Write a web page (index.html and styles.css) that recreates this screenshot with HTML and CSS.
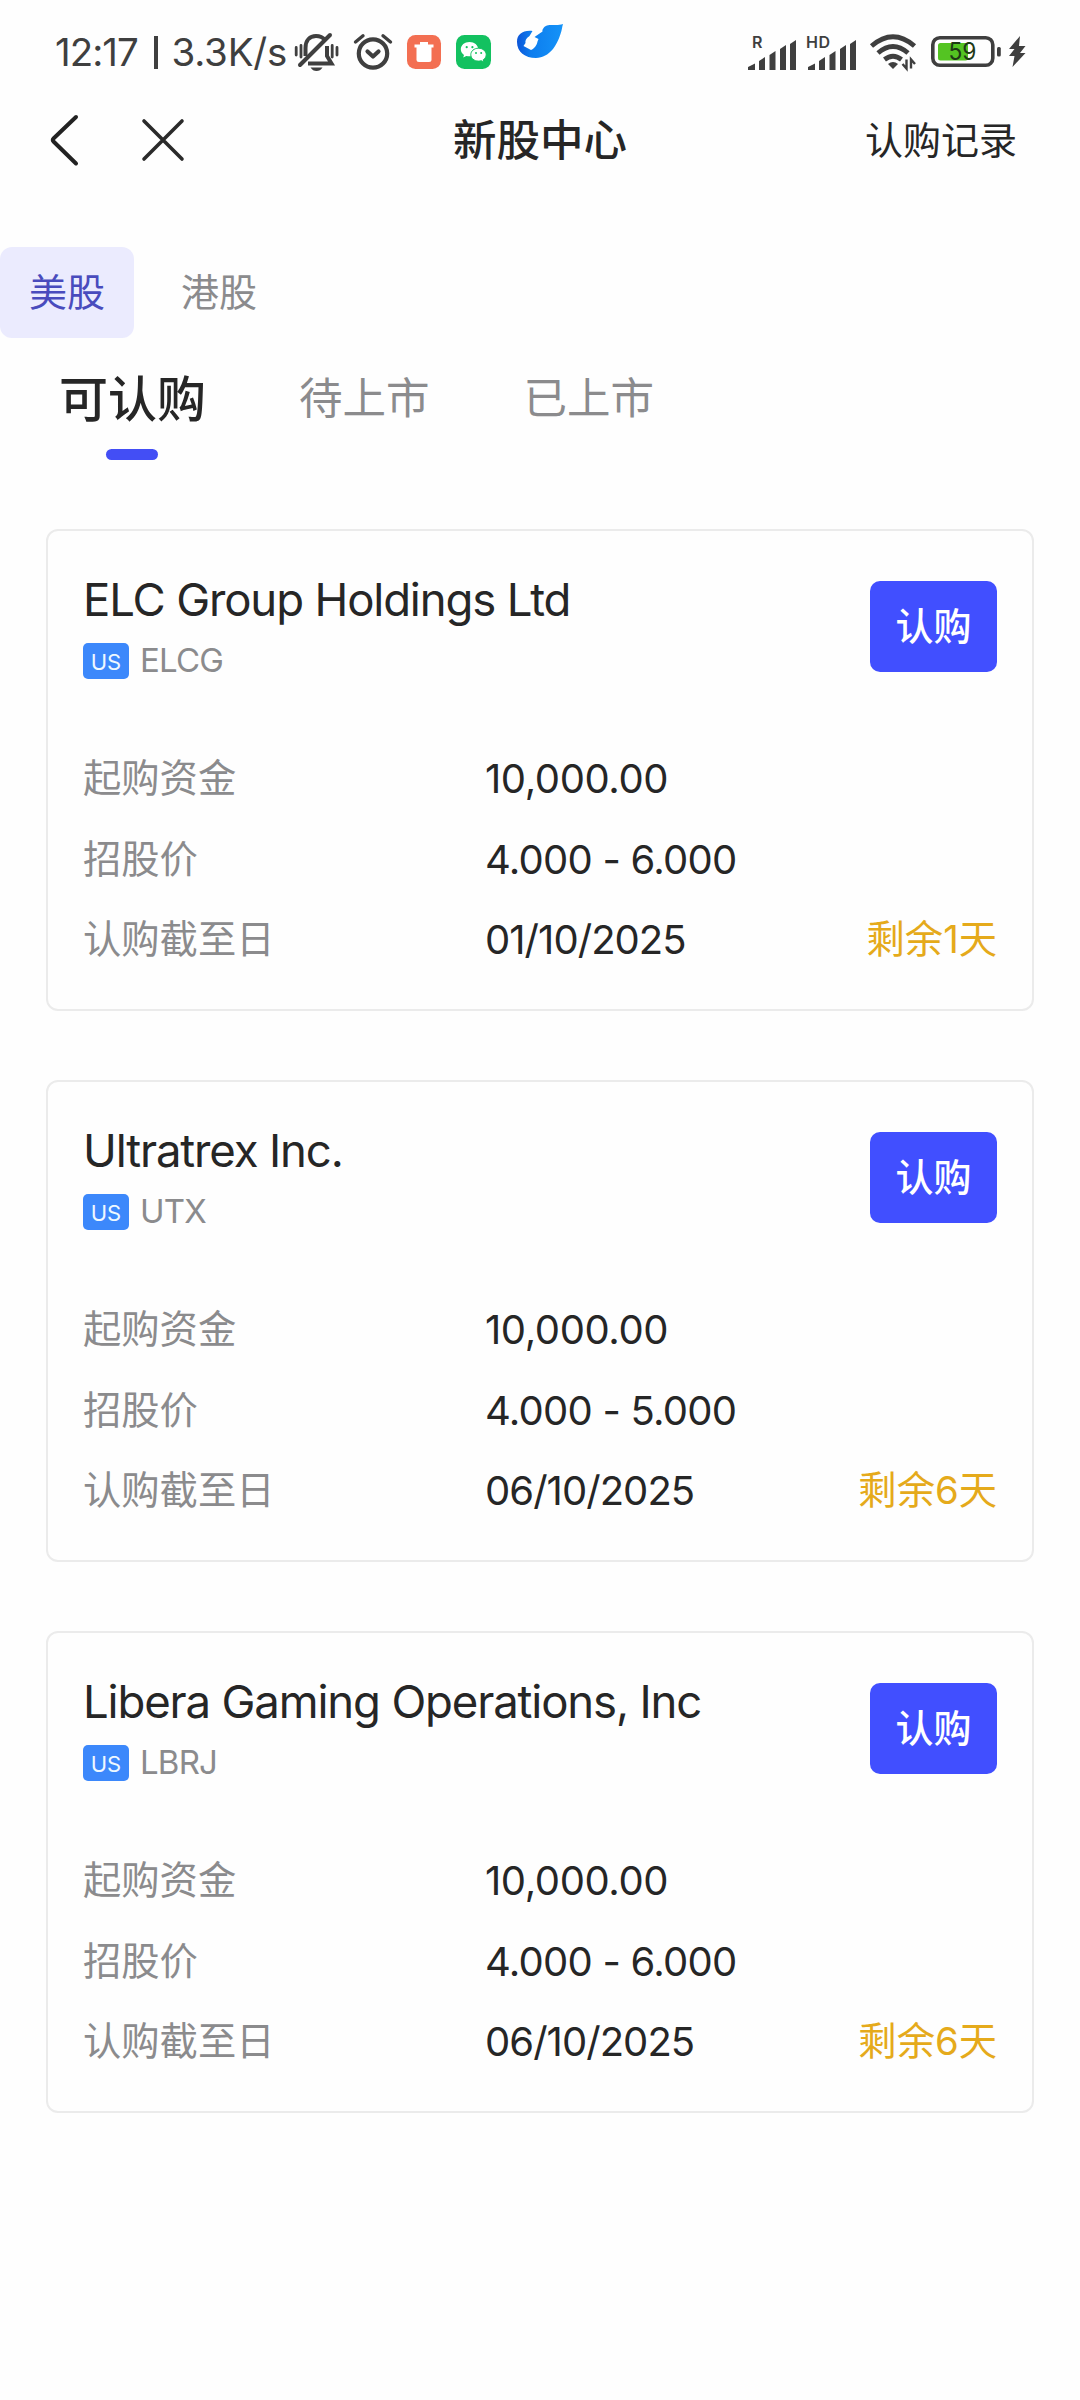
FILE: index.html
```html
<!DOCTYPE html>
<html lang="zh-CN">
<head>
<meta charset="utf-8">
<title>新股中心</title>
<link rel="stylesheet" href="styles.css">
</head>
<body>
<div class="status">
  <span class="clock">12:17</span><span class="divider"></span><span class="speed">3.3K/s</span>
  <svg class="bell" width="46" height="40" viewBox="0 0 46 40" fill="none" stroke="#3f3f3f" stroke-width="4">
    <path d="M11.500 24V16C11.500 8 16 4 22 4C26 4 29 5.500 31 8"/>
    <path d="M33 14V24L37.500 31.500H14"/>
    <path d="M6 33L36 3" stroke-linecap="round"/>
    <path d="M16.500 35.500H28.500C27 38 25 39 22.500 39S18 38 16.500 35.500Z" fill="#3f3f3f" stroke="none"/>
    <path d="M2.200 15.500V23M7 13.500V25M38.200 13.500V25M43 15.500V23" stroke-width="2.800" stroke-linecap="round"/>
  </svg>
  <svg class="alarm" width="40" height="38" viewBox="0 0 40 38" fill="none" stroke="#3f3f3f" stroke-width="4.200" stroke-linecap="round">
    <circle cx="20" cy="20.500" r="14.200"/>
    <path d="M14.500 18.500L20 23.500L25.500 18.500" stroke-linejoin="round"/>
    <path d="M2.500 9L10 2.800M37.500 9L30 2.800" stroke-width="3.400"/>
  </svg>
  <svg class="trash" width="34" height="34" viewBox="0 0 34 34">
    <rect width="34" height="34" rx="8.500" fill="#f36f52"/>
    <path d="M7.500 9.500H13V7H21V9.500H26.500V12.500H7.500Z" fill="#fff"/>
    <path d="M9.500 12H24.500V24.500Q24.500 27 22 27H12Q9.500 27 9.500 24.500Z" fill="#fff"/>
  </svg>
  <svg class="wechat" width="35" height="34" viewBox="0 0 35 34">
    <rect width="35" height="34" rx="8.500" fill="#13c160"/>
    <path d="M13.500 7C8.500 7 4.800 10.200 4.800 14.200C4.800 16.500 6 18.600 8 19.900L7.200 22.500L10.300 20.900Q12 21.300 13.900 21.300C18.400 21.300 22.200 18 22.200 14.200C22.200 10.200 18.400 7 13.500 7Z" fill="#fff"/>
    <path d="M22.500 13.200C18 13.200 14.800 16.200 14.800 19.700C14.800 23.200 18 26.100 22.500 26.100Q24 26.100 25.300 25.700L28 27L27.300 24.700C29.100 23.500 30.200 21.700 30.200 19.700C30.200 16.200 26.900 13.200 22.500 13.200Z" fill="#fff" stroke="#13c160" stroke-width="1"/>
    <g fill="#13c160"><circle cx="10.700" cy="12.200" r="1.100"/><circle cx="16.400" cy="12.200" r="1.100"/><circle cx="20" cy="18" r="1"/><circle cx="25.200" cy="18" r="1"/></g>
  </svg>
  <svg class="bird" width="48" height="36" viewBox="0 0 48 36">
    <defs><linearGradient id="wing" x1="0" y1="0" x2="1" y2="0"><stop offset="0" stop-color="#0d55d8"/><stop offset=".3" stop-color="#0d7dee"/><stop offset="1" stop-color="#1593f8"/></linearGradient></defs>
    <path d="M1 19C1 11 7 7 16.500 8L13.500 13C10 15 9 18 9.500 20L7.500 23L15 27C18 26 21 22 21.500 18.500L22.500 16L18.500 14L26.500 8.500C26 6.500 28 3.500 31 2.500C36 1 41 3 47 1C46 4 46 7 44.500 11C41 22 34 34.500 20 35C9 35 1 29 1 19Z" fill="url(#wing)"/>
  </svg>
  <div class="system">
    <svg width="110" height="36" viewBox="0 -2 110 36" fill="#3f3f3f">
      <text class="sim" x="4" y="12" textLength="11">R</text>
      <text class="sim" x="58" y="12" textLength="24">HD</text>
      <path id="bars" d="M0 34V31L7 27.500V34ZM11 34V25L17 21V34ZM21.500 34V19L27.500 15V34ZM32 34V13L38 9V34ZM42 34V8L48 4V34Z"/>
      <use href="#bars" x="60"/>
    </svg>
    <svg width="47" height="36" viewBox="0 0 47 36" fill="none" stroke="#3f3f3f" stroke-width="4.800">
      <path d="M1.500 12Q23 -6.500 44.500 12"/>
      <path d="M8 19Q23 6 38 19"/>
      <path d="M14.500 25.500Q23 19 31.500 25.500"/>
      <path d="M18 30Q23 26 28 30L23 35Z" fill="#3f3f3f" stroke="none"/>
      <path d="M36.500 25.500V34.500L32.500 30M41 34.500V25.500L45 30" stroke-width="2.400"/>
    </svg>
    <svg class="battery" width="70" height="32" viewBox="0 0 70 32">
      <rect x="1.800" y="1.800" width="60" height="27.500" rx="7" fill="none" stroke="#3f3f3f" stroke-width="3.600"/>
      <rect x="7" y="7" width="30" height="17.500" rx="2.500" fill="#54c422"/>
      <rect x="66" y="11" width="3.800" height="9.500" rx="1.500" fill="#3f3f3f"/>
      <text class="level" x="17.500" y="24" textLength="28" lengthAdjust="spacingAndGlyphs">59</text>
    </svg>
    <svg width="18" height="32" viewBox="0 0 18 32" fill="#3f3f3f"><path d="M12 0L1 13H6.500L1 20H6.500L4.500 31L17.500 17H12L17.500 10H11Z"/></svg>
  </div>
</div>

<header class="nav">
  <svg class="back" width="30" height="54" viewBox="0 0 30 54" fill="none" stroke="#222" stroke-width="4" stroke-linecap="round" stroke-linejoin="round"><path d="M27 4L4.500 25.500Q3 27 4.500 28.500L27 50.500"/></svg>
  <svg class="close" width="42" height="42" viewBox="0 0 42 42" fill="none" stroke="#2a2a2a" stroke-width="3.600" stroke-linecap="round"><path d="M2 2L40 40M40 2L2 40"/></svg>
  <h1 class="page-title">新股中心</h1>
  <span class="records">认购记录</span>
</header>

<nav class="markets"><span class="market active">美股</span><span class="market">港股</span></nav>
<nav class="stages"><span class="stage active">可认购</span><span class="stage">待上市</span><span class="stage">已上市</span></nav>

<main class="list">
  <article class="card">
    <div class="head">
      <div><h2 class="name">ELC Group Holdings Ltd</h2><div class="ticker"><span class="us">US</span><span class="code">ELCG</span></div></div>
      <button class="buy">认购</button>
    </div>
    <div class="row"><span class="label">起购资金</span><span class="value">10,000.00</span></div>
    <div class="row"><span class="label">招股价</span><span class="value price">4.000 - 6.000</span></div>
    <div class="row"><span class="label">认购截至日</span><span class="value date">01/10/2025</span><span class="left">剩余1天</span></div>
  </article>
  <article class="card">
    <div class="head">
      <div><h2 class="name">Ultratrex Inc.</h2><div class="ticker"><span class="us">US</span><span class="code">UTX</span></div></div>
      <button class="buy">认购</button>
    </div>
    <div class="row"><span class="label">起购资金</span><span class="value">10,000.00</span></div>
    <div class="row"><span class="label">招股价</span><span class="value price">4.000 - 5.000</span></div>
    <div class="row"><span class="label">认购截至日</span><span class="value date">06/10/2025</span><span class="left">剩余6天</span></div>
  </article>
  <article class="card">
    <div class="head">
      <div><h2 class="name">Libera Gaming Operations, Inc</h2><div class="ticker"><span class="us">US</span><span class="code">LBRJ</span></div></div>
      <button class="buy">认购</button>
    </div>
    <div class="row"><span class="label">起购资金</span><span class="value">10,000.00</span></div>
    <div class="row"><span class="label">招股价</span><span class="value price">4.000 - 6.000</span></div>
    <div class="row"><span class="label">认购截至日</span><span class="value date">06/10/2025</span><span class="left">剩余6天</span></div>
  </article>
</main>
</body>
</html>
```
FILE: styles.css
```css
* { box-sizing: border-box; margin: 0; padding: 0; }
body {
  width: 1080px;
  height: 2400px;
  overflow: hidden;
  background: #fefefe;
  color: #262626;
  font-family: Inter, "Noto Sans CJK SC", sans-serif;
  font-size: 38.3px;
}
h1, h2 { font-weight: 400; }
svg { display: block; flex: none; overflow: visible; }

.status {
  display: flex;
  align-items: center;
  height: 104px;
  padding: 0 54px 0 55px;
  color: #3f3f3f;
  font-size: 38.5px;
  line-height: 46px;
}
.clock { width: 99px; white-space: nowrap; letter-spacing: -1px; }
.divider { width: 3.5px; height: 33px; background: #3f3f3f; }
.speed { width: 122px; margin-left: 14px; white-space: nowrap; letter-spacing: -.2px; }
.alarm { margin-left: 13px; }
.trash { margin-left: 14px; }
.wechat { margin-left: 15px; }
.bird { margin: 0 0 22px 25px; }
.system { display: flex; align-items: center; margin-left: auto; }
.system svg + svg { margin-left: 12px; }
.system svg + .battery { margin-left: 14px; }
.system .battery + svg { margin-left: 7px; }
.sim { font: 600 16px Inter, sans-serif; }
.level { font: 400 24.5px Inter, sans-serif; fill: #1e3a16; }

.nav {
  display: grid;
  grid-template-columns: 30px 42px 1fr auto;
  align-items: center;
  height: 72px;
  padding: 0 63px 0 49px;
}
.close { margin-left: 63px; }
.page-title {
  grid-column: 3;
  padding-left: 332px;
  font-size: 43.5px;
  font-weight: 500;
  line-height: 60px;
}
.records { font-size: 38px; line-height: 56px; }

.markets { display: flex; margin-top: 71px; }
.market {
  width: 134px;
  height: 91px;
  border-radius: 12px;
  color: #8b8b8d;
  font-size: 38px;
  line-height: 91px;
  text-align: center;
}
.market + .market { margin-left: 18px; }
.market.active { background: #ebebfe; color: #494bbd; }

.stages {
  display: flex;
  align-items: center;
  height: 122px;
  padding: 0 0 2px 59px;
  color: #8b8b8d;
  font-size: 43.5px;
}
.stage { margin-right: 94px; line-height: 122px; }
.stage.active {
  position: relative;
  margin-right: 93px;
  padding-top: 4px;
  color: #262626;
  font-size: 49px;
  font-weight: 500;
}
.stage.active::after {
  content: "";
  position: absolute;
  left: 47px;
  bottom: 1px;
  width: 52px;
  height: 11px;
  border-radius: 6px;
  background: #434ef5;
}

.list { display: grid; gap: 69px; padding: 69px 46px 0; }
.card {
  height: 482px;
  padding: 50px 35px 0 35px;
  border: 2px solid #ebebeb;
  border-radius: 12px;
}
.head { display: flex; justify-content: space-between; height: 157px; }
.name { margin-top: -10px; font-size: 45.5px; line-height: 57px; letter-spacing: -1.15px; white-space: nowrap; }
.ticker { display: flex; align-items: center; margin-top: 15px; height: 36px; }
.us {
  width: 46px;
  height: 36px;
  border-radius: 5px;
  background: #3c88fb;
  color: #eef8ff;
  font-size: 22px;
  line-height: 38px;
  text-align: center;
}
.code { margin-left: 11px; color: #8b8b8d; font-size: 33px; line-height: 34px; letter-spacing: -.8px; padding-bottom: 2px; }
.buy {
  width: 127px;
  height: 91px;
  padding-bottom: 6px;
  border: 0;
  border-radius: 10px;
  background: #414fff;
  color: #fff;
  font: 500 38px/80px "Noto Sans CJK SC", sans-serif;
}
.row { display: grid; grid-template-columns: 402px 1fr auto; height: 80.5px; line-height: 81px; white-space: nowrap; }
.label { color: #8b8b8d; }
.value { font-size: 40px; letter-spacing: -.4px; }
.price { letter-spacing: -.75px; }
.date { letter-spacing: -.95px; }
.left { color: #e5aa1b; }
```
